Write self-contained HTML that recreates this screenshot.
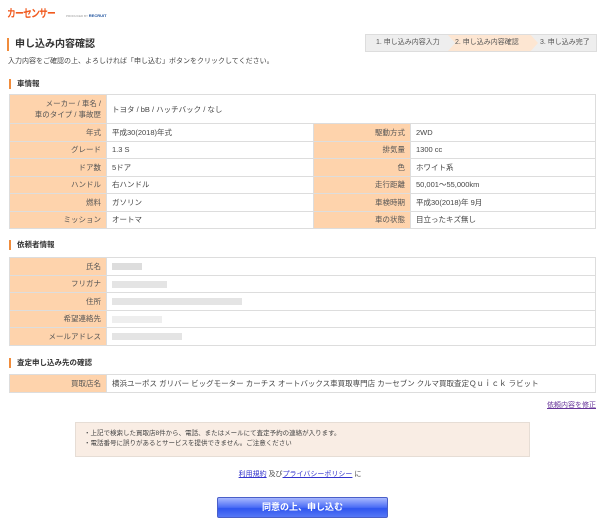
<!DOCTYPE html>
<html><head><meta charset="utf-8">
<style>
*{margin:0;padding:0;box-sizing:border-box}
body{width:600px;height:525px;background:#fff;font-family:"Liberation Sans","Noto Sans CJK JP",sans-serif;color:#333;position:relative;overflow:hidden;font-size:8px}
.a{position:absolute}
.h{position:absolute;left:9px;border-left:2px solid #f08c3c;padding-left:6px;font-weight:bold;font-size:7.5px;line-height:10px;color:#333}
table{position:absolute;border-collapse:collapse;left:9px;width:587px;font-size:7.5px}
td{border:1px solid #ddd;padding:0 5px;height:17.5px;color:#444}
td.l{background:#fed3ac;text-align:right;width:97px;color:#555}
.b{display:inline-block;height:7px;background:#e4e4e4;vertical-align:middle}
</style></head><body>
<div class="a" style="left:7px;top:5px;color:#f05a1e;font-weight:bold;font-size:11px;letter-spacing:-1px;transform:scaleX(0.8);transform-origin:left">カーセンサー</div>
<div class="a" style="left:66px;top:13px;font-size:3px;color:#999">PRODUCED BY <span style="color:#1a4f9c;font-size:4px;font-weight:bold">RECRUIT</span></div>
<div class="a" style="left:7px;top:38px;border-left:2px solid #f08c3c;padding-left:6px;font-size:10px;line-height:13px;font-weight:bold;color:#333">申し込み内容確認</div>
<div class="a" style="left:8px;top:56px;font-size:7px;color:#444">入力内容をご確認の上、よろしければ「申し込む」ボタンをクリックしてください。</div>
<div class="a" style="left:365px;top:34px;width:232px;height:18px;background:#eee;border:1px solid #ddd;font-size:7px;line-height:16px;color:#555;overflow:hidden">
<span class="a" style="left:82px;width:90px;height:16px;background:#fde6d2;clip-path:polygon(0 0,92% 0,100% 50%,92% 100%,0 100%,8% 50%)"></span>
<span class="a" style="left:10px">1. 申し込み内容入力</span>
<span class="a" style="left:89px">2. 申し込み内容確認</span>
<span class="a" style="left:174px">3. 申し込み完了</span>
</div>
<div class="h" style="top:79px">車情報</div>
<table style="top:94px">
<tr><td class="l" style="height:29px;line-height:11px">メーカー / 車名 /<br>車のタイプ / 事故歴</td><td colspan="3">トヨタ / bB / ハッチバック / なし</td></tr>
<tr><td class="l">年式</td><td style="width:207px">平成30(2018)年式</td><td class="l" style="width:96px">駆動方式</td><td>2WD</td></tr>
<tr><td class="l">グレード</td><td>1.3 S</td><td class="l">排気量</td><td>1300 cc</td></tr>
<tr><td class="l">ドア数</td><td>5ドア</td><td class="l">色</td><td>ホワイト系</td></tr>
<tr><td class="l">ハンドル</td><td>右ハンドル</td><td class="l">走行距離</td><td>50,001～55,000km</td></tr>
<tr><td class="l">燃料</td><td>ガソリン</td><td class="l">車検時期</td><td>平成30(2018)年 9月</td></tr>
<tr><td class="l">ミッション</td><td>オートマ</td><td class="l">車の状態</td><td>目立ったキズ無し</td></tr>
</table>
<div class="h" style="top:240px">依頼者情報</div>
<table style="top:257px">
<tr><td class="l">氏名</td><td><span class="b" style="width:30px;background:#ddd"></span></td></tr>
<tr><td class="l">フリガナ</td><td><span class="b" style="width:55px"></span></td></tr>
<tr><td class="l">住所</td><td><span class="b" style="width:130px"></span></td></tr>
<tr><td class="l">希望連絡先</td><td><span class="b" style="width:50px;background:#eee"></span></td></tr>
<tr><td class="l">メールアドレス</td><td><span class="b" style="width:70px"></span></td></tr>
</table>
<div class="h" style="top:358px">査定申し込み先の確認</div>
<table style="top:374px">
<tr><td class="l">買取店名</td><td>横浜ユーポス ガリバー ビッグモーター カーチス オートバックス車買取専門店 カーセブン クルマ買取査定Ｑｕｉｃｋ ラビット</td></tr>
</table>
<div class="a" style="right:4px;top:400px;font-size:7px;color:#639;text-decoration:underline">依頼内容を修正</div>
<div class="a" style="left:75px;top:422px;width:455px;height:35px;background:#f9ede4;border:1px solid #e6ddd5;font-size:6.5px;line-height:10px;padding:6px 0 0 8px;color:#444">・上記で検索した買取店8件から、電話、またはメールにて査定予約の連絡が入ります。<br>・電話番号に誤りがあるとサービスを提供できません。ご注意ください</div>
<div class="a" style="left:0;width:600px;top:469px;text-align:center;font-size:7px;color:#444"><span style="color:#33c;text-decoration:underline">利用規約</span> 及び<span style="color:#33c;text-decoration:underline">プライバシーポリシー</span> に</div>
<div class="a" style="left:217px;top:497px;width:171px;height:21px;border:1px solid #4a5fc8;border-radius:2px;background:linear-gradient(#a8b8ff,#4a6cf5 50%,#2f55ef 55%,#5577f5);color:#fff;font-weight:bold;font-size:9px;text-align:center;line-height:19px">同意の上、申し込む</div>
</body></html>
